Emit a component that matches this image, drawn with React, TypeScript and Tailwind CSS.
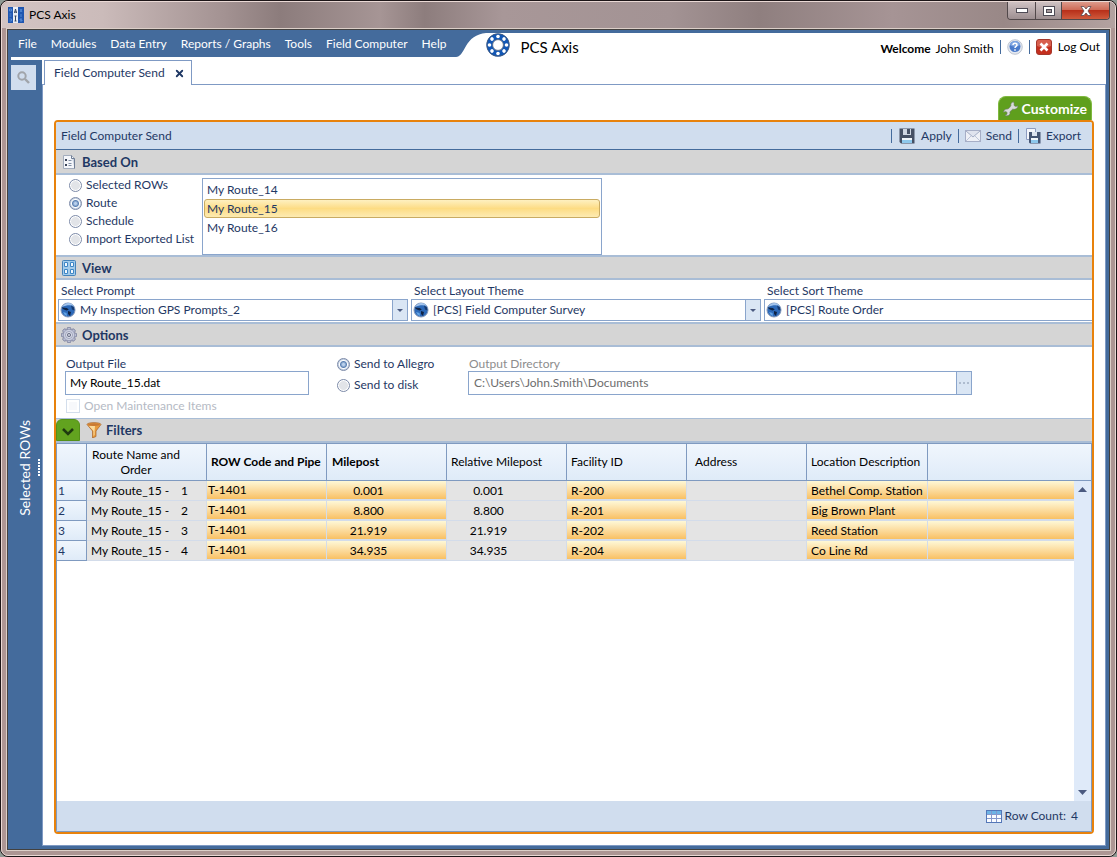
import { useState } from 'react'
import type { ReactNode } from 'react'
import { X } from 'lucide-react'
import clsx from 'clsx'

const menuItems = ['File', 'Modules', 'Data Entry', 'Reports / Graphs', 'Tools', 'Field Computer', 'Help']
const basedOnOptions = ['Selected ROWs', 'Route', 'Schedule', 'Import Exported List']
const routes = ['My Route_14', 'My Route_15', 'My Route_16']

const themes = [
  { id: 'prompt', label: 'Select Prompt', value: 'My Inspection GPS Prompts_2' },
  { id: 'layout', label: 'Select Layout Theme', value: '[PCS] Field Computer Survey' },
  { id: 'sort', label: 'Select Sort Theme', value: '[PCS] Route Order' },
]

const rows = [
  { order: 1, code: 'T-1401', milepost: '0.001', facility: 'R-200', location: 'Bethel Comp. Station' },
  { order: 2, code: 'T-1401', milepost: '8.800', facility: 'R-201', location: 'Big Brown Plant' },
  { order: 3, code: 'T-1401', milepost: '21.919', facility: 'R-202', location: 'Reed Station' },
  { order: 4, code: 'T-1401', milepost: '34.935', facility: 'R-204', location: 'Co Line Rd' },
]

function AppIcon() {
  return (
    <svg width="16" height="16" viewBox="0 0 16 16">
      <rect width="16" height="16" fill="#1f56b0" />
      <rect x="5" width="5" height="16" fill="#e9eef6" />
      <path d="M1.500 2h2v2h-2zM1.500 7h2M1.500 9h2M1.500 12h2v2h-2M12 2l2 3M14 2l-2 3M13 7v3M14 12h-2v1h2v1h-2" stroke="#5f96dd" strokeWidth="0.800" fill="none" />
      <path d="M6.500 6l1-4 1 4M6.500 5h2M7.500 9v5M6.500 9h2M6.500 14h2" stroke="#37475f" fill="none" />
    </svg>
  )
}

function Logo() {
  const holes = [0, 45, 90, 135, 180, 225, 270, 315]
  return (
    <svg width="24" height="24" viewBox="0 0 24 24">
      <circle cx="12" cy="12" r="8.500" fill="none" stroke="#1257b5" strokeWidth="6" />
      <circle cx="12" cy="12" r="11.300" fill="none" stroke="#4a5b73" strokeWidth="0.800" />
      <circle cx="12" cy="12" r="5.400" fill="none" stroke="#4a5b73" strokeWidth="0.800" />
      {holes.map((angle) => (
        <circle key={angle} cx="12" cy="3.500" r="1.800" fill="#fff" transform={`rotate(${angle} 12 12)`} />
      ))}
    </svg>
  )
}

function HelpIcon() {
  return (
    <svg width="16" height="16" viewBox="0 0 16 16">
      <circle cx="8" cy="8" r="7.300" fill="#e4e8f0" stroke="#b3bac8" strokeWidth="0.800" />
      <circle cx="8" cy="7.500" r="5.500" fill="#4a7bcb" />
      <path d="M3 6a5 4 0 0 1 10 0c-3 2-7 2-10 0z" fill="#7fa6e2" />
      <path d="M6 6c0-2.500 4-2.500 4 0 0 1.500-2 1.300-2 3M8 10.300v1.400" fill="none" stroke="#fff" strokeWidth="1.500" />
    </svg>
  )
}

function LogOutIcon() {
  return (
    <svg width="16" height="16" viewBox="0 0 16 16">
      <rect x="0.500" y="0.500" width="15" height="15" rx="2.500" fill="#c42f1e" stroke="#a5382c" />
      <path d="M1 3q0-2 2-2h10q2 0 2 2v4q-7 3-14 0z" fill="#d8604e" />
      <path d="M4.500 4.500l7 7M11.500 4.500l-7 7" stroke="#fff" strokeWidth="2.600" />
    </svg>
  )
}

function FloppyIcon() {
  return (
    <svg width="16" height="16" viewBox="0 0 16 16">
      <path d="M0.500 0.500h15v15H2l-1.500-1.500z" fill="#465064" />
      <rect x="4" y="1" width="8" height="6" fill="#cfd6e2" />
      <rect x="8" y="1" width="3" height="5" fill="#465064" />
      <rect x="3" y="10" width="10" height="5" fill="#8ec8ec" />
      <rect x="3" y="10" width="10" height="2" fill="#f2f7fb" />
    </svg>
  )
}

function EnvelopeIcon() {
  return (
    <svg width="16" height="16" viewBox="0 0 16 16">
      <rect x="0.500" y="2.500" width="15" height="11" fill="#eef0f6" stroke="#a6aec6" />
      <path d="M1 3l7 6 7-6" fill="#dfe3ee" stroke="#a3adc6" />
      <path d="M1 13l5-5M15 13l-5-5" fill="none" stroke="#bcc4d8" />
    </svg>
  )
}

function ExportIcon() {
  return (
    <svg width="16" height="16" viewBox="0 0 16 16">
      <path d="M1.500 0.500h9v11h-9z" fill="#f3f5fb" stroke="#8d9cc0" />
      <path d="M4 4h11.500v11.500H5l-1-1z" fill="#465674" />
      <rect x="7" y="4" width="5" height="4" fill="#dde4ef" />
      <rect x="6" y="11" width="7" height="4" fill="#8ec8ec" />
      <rect x="6" y="10" width="7" height="2" fill="#f2f7fb" />
    </svg>
  )
}

function WrenchIcon() {
  return (
    <svg width="16" height="16" viewBox="0 0 16 16">
      <path
        d="M10.500 0.800c-2 .5-3 2-2.600 4L6 7.300 4.300 8.100C2 7.800.6 9.300.6 11.300l2-.9 1.500 1-.1 1.800-2 1c2 1.200 4.500.5 5-1.600l-.1-1.800 2.700-2.600c2.500.6 5-.5 5.400-3.400l-2.300.8-1.700-1.200.1-2z"
        fill="#d9dcda"
        stroke="#6d7a6a"
        strokeWidth="0.600"
      />
    </svg>
  )
}

function SearchIcon() {
  return (
    <svg width="13" height="13" viewBox="0 0 13 13">
      <circle cx="5" cy="5" r="3.700" fill="none" stroke="#a0a4aa" strokeWidth="2" />
      <path d="M8 8l4 4" stroke="#a0a4aa" strokeWidth="2.400" />
    </svg>
  )
}

function ChecklistIcon() {
  return (
    <svg width="12" height="14" viewBox="0 0 12 14">
      <path d="M0.500 0.500h8l3 3v10h-11z" fill="#f4f6fa" stroke="#a3adbd" />
      <path d="M8.500 0.500v3h3v10" fill="#c9d2df" stroke="#6f7d94" />
      <path d="M2 4h2v2H2zM2 9h2v2H2z" fill="#3c4659" />
      <path d="M5.500 5.500h3M5.500 8.500h3M5.500 10.500h3" stroke="#8290a6" />
    </svg>
  )
}

function ViewIcon() {
  return (
    <svg width="14" height="16" viewBox="0 0 14 16">
      <rect x="0.500" y="0.500" width="13" height="15" rx="1" fill="#a3cbea" stroke="#4583ba" />
      <path d="M2.500 2.500h3v4h-3zM8.500 2.500h3v4h-3zM2.500 9.500h3v4h-3zM8.500 9.500h3v4h-3z" fill="#f3f9fe" stroke="#3d86c6" />
    </svg>
  )
}

function GearIcon() {
  const teeth = [0, 45, 90, 135, 180, 225, 270, 315]
  return (
    <svg width="16" height="16" viewBox="0 0 16 16">
      {teeth.map((angle) => (
        <rect key={angle} x="6.200" y="0.400" width="3.600" height="4" rx="1" fill="#b9bed2" stroke="#6f7494" strokeWidth="0.800" transform={`rotate(${angle} 8 8)`} />
      ))}
      <circle cx="8" cy="8" r="5.600" fill="#cdd1e1" stroke="#878ca8" strokeWidth="0.600" />
      <circle cx="8" cy="8" r="3.500" fill="#e3e6f0" stroke="#8f94ae" strokeWidth="0.800" />
      <circle cx="8" cy="8" r="1.700" fill="#b9bdcc" stroke="#5f647e" strokeWidth="0.800" />
    </svg>
  )
}

function FunnelIcon() {
  return (
    <svg width="16" height="16" viewBox="0 0 16 16">
      <path d="M1 2.500c0-2.500 14-2.500 14 0L10 9v5.500L6.500 16V9z" fill="#e79a3c" stroke="#a9642a" strokeWidth="0.700" />
      <path d="M3 4l4.500 5v5L8.600 13V8.500L9 4z" fill="#fbdb9a" />
      <ellipse cx="8" cy="2.600" rx="6" ry="1.300" fill="#c97a34" />
    </svg>
  )
}

function GlobeIcon() {
  return (
    <svg width="16" height="16" viewBox="0 0 16 16">
      <circle cx="8" cy="8" r="7" fill="#2c69b8" stroke="#8598b8" />
      <path d="M2 5c3-5 9-5 12-1-3-1-8-1-12 1z" fill="#a3c4ec" />
      <path d="M1.800 5.500l5 .5 2 1.500-2 1L5 8 3 7zM8 9l3 1-1 4-2-2z" fill="#0f2345" />
      <path d="M11 3.500l3 2 .5 3-2.500-1z" fill="#163a70" />
      <path d="M3 10q1 3 4 4l-.500-3z" fill="#63a4e6" />
    </svg>
  )
}

function GridIcon() {
  return (
    <svg width="16" height="13" viewBox="0 0 16 13">
      <rect x="0.500" y="0.500" width="15" height="12" fill="#fafcff" stroke="#5477b8" />
      <rect x="1" y="1" width="14" height="3" fill="#6db4e6" />
      <path d="M1 4.500h14M1 8.500h14M5.500 1v11M10.500 1v11" stroke="#8598cc" />
    </svg>
  )
}

function Arrow({ up = false }: { up?: boolean }) {
  return (
    <svg width="9" height="5" viewBox="0 0 9 5">
      <path d={up ? 'M0 5L4.500 0L9 5z' : 'M0 0h9L4.500 5z'} fill="#4b5a80" />
    </svg>
  )
}

function SectionHeader({ icon, title, first = false }: { icon: ReactNode; title: string; first?: boolean }) {
  return (
    <div
      className={clsx(
        'flex h-[25px] shrink-0 items-center border-b-2 border-[#a9bdd6] bg-[#d5d5d5] pl-[5px]',
        !first && 'border-t-2',
      )}
    >
      <span className="flex w-4 justify-center">{icon}</span>
      <h2 className="pl-[5px] text-[13px] font-bold text-[#1f3864]">{title}</h2>
    </div>
  )
}

function Radio({ name, label, checked, onChange }: { name: string; label: string; checked: boolean; onChange: () => void }) {
  return (
    <label className="flex items-center gap-1">
      <input
        type="radio"
        name={name}
        checked={checked}
        onChange={onChange}
        className="h-[13px] w-[13px] shrink-0 appearance-none rounded-full border border-[#7c8aa8] bg-[radial-gradient(circle,#e2e4e8_0_4px,#ffffff_5px)] checked:bg-[radial-gradient(circle,#b9d0ec_0_1px,#5c82b4_3px,#ffffff_4px,#c5d2e4_5px)]"
      />
      {label}
    </label>
  )
}

function TitleBar() {
  return (
    <header className="flex h-[26px] items-start bg-[linear-gradient(90deg,#d3c4c3_0%,#cbbbba_9%,#a39292_20%,#8c7c7c_25%,#a69595_34%,#8d7d7d_38%,#a89798_45%,#a39394_60%,#8f7f7f_68%,#a69495_80%,#998887_90%,#b3a2a0_100%)] pl-[6px]">
      <div className="flex h-[26px] flex-1 items-center gap-[5px] text-black">
        <AppIcon />
        <h1>PCS Axis</h1>
      </div>
      <div className="mr-[5px] flex h-[18px] overflow-hidden rounded-b border border-t-0 border-[#51484a]">
        <button aria-label="Minimize" className="flex w-7 items-center justify-center border-r border-[#51484a] bg-gradient-to-b from-[#cfc2c3] to-[#9d8f91]">
          <svg width="12" height="5" viewBox="0 0 12 5">
            <rect x="0.500" y="0.500" width="11" height="4" fill="#fff" stroke="#4e4b55" />
          </svg>
        </button>
        <button aria-label="Maximize" className="flex w-[26px] items-center justify-center border-r border-[#51484a] bg-gradient-to-b from-[#cfc2c3] to-[#9d8f91]">
          <svg width="12" height="10" viewBox="0 0 12 10">
            <rect x="0.500" y="0.500" width="11" height="9" fill="#fff" stroke="#4e4b55" />
            <rect x="3.500" y="3.500" width="5" height="3" fill="#a69a9c" stroke="#4e4b55" />
          </svg>
        </button>
        <button aria-label="Close" className="flex w-[47px] items-center justify-center bg-[linear-gradient(#dd9a8b_0%,#cf6c58_45%,#b8301a_50%,#cf5a3c_100%)]">
          <svg width="12" height="10" viewBox="0 0 12 10">
            <path d="M1 0.500h3l2 2.500 2-2.500h3L8 5l3 4.500H8L6 7 4 9.500H1L4 5z" fill="#fff" stroke="#5b4a50" strokeWidth="0.800" />
          </svg>
        </button>
      </div>
    </header>
  )
}

function TopBar() {
  return (
    <div className="ml-[3px] flex h-[27px] bg-white">
      <nav className="-ml-[3px] flex h-6 items-center gap-[14px] bg-[#446b9c] pr-[10px] pb-[2px] pl-[10px] text-white">
        {menuItems.map((item) => (
          <button key={item} className="whitespace-nowrap">
            {item}
          </button>
        ))}
      </nav>
      <svg width="30" height="24" viewBox="0 0 30 24" className="shrink-0">
        <path d="M0 0h30C20 1 14 6 10 13 6 20 4 24 0 24z" fill="#446b9c" />
      </svg>
      <div className="flex h-6 flex-1 items-center gap-[10px] text-black">
        <Logo />
        <span className="pt-1 text-[15px]">PCS Axis</span>
      </div>
      <div className="flex h-[27px] items-center pr-[6px] whitespace-nowrap text-black">
        <span className="pt-1">
          <b className="pr-[2px]">Welcome</b> John Smith
        </span>
        <span className="mx-[6px] h-[14px] w-px bg-[#446b9c]" />
        <button aria-label="Help">
          <HelpIcon />
        </button>
        <span className="mx-[6px] h-[14px] w-px bg-[#446b9c]" />
        <button className="flex items-center gap-[6px]">
          <LogOutIcon />
          Log Out
        </button>
      </div>
    </div>
  )
}

function Sidebar() {
  return (
    <aside className="flex w-[34px] shrink-0 flex-col pt-[5px] pl-[3px]">
      <button aria-label="Search" className="flex h-[25px] w-[25px] items-center justify-center bg-[#d0ddee]">
        <SearchIcon />
      </button>
      <div className="flex flex-1 items-center pl-[6px]">
        <button className="rotate-180 text-[14px] leading-4 text-white [writing-mode:vertical-rl]">Selected ROWs</button>
        <span className="ml-[5px] h-[18px] w-[2px] bg-[repeating-linear-gradient(#ffffff_0_2px,transparent_2px_3px)]" />
      </div>
    </aside>
  )
}

function BasedOn() {
  const [basis, setBasis] = useState('Route')
  const [route, setRoute] = useState('My Route_15')

  return (
    <section className="flex h-[80px] pt-[2px] pl-[13px]">
      <fieldset className="w-[133px] text-[#1f3864]">
        {basedOnOptions.map((option) => (
          <div key={option} className="h-[18px] whitespace-nowrap">
            <Radio name="based-on" label={option} checked={basis === option} onChange={() => setBasis(option)} />
          </div>
        ))}
      </fieldset>
      <ul role="listbox" aria-label="Routes" className="mt-px w-[400px] border border-[#8aa5cc] pt-px">
        {routes.map((item) => (
          <li
            key={item}
            role="option"
            aria-selected={item === route}
            onClick={() => setRoute(item)}
            className={clsx(
              'mx-px flex h-[19px] items-center rounded-[3px] border pl-[2px]',
              item === route ? 'border-[#c9ab62] bg-gradient-to-b from-[#fef0c0] via-[#fddc83] to-[#fdebb2]' : 'border-transparent',
            )}
          >
            {item}
          </li>
        ))}
      </ul>
    </section>
  )
}

function ThemeSelects() {
  return (
    <section className="flex h-[42px] gap-[3px] overflow-hidden pt-[3px] pl-[2px]">
      {themes.map((theme) => (
        <div key={theme.id} className="w-[350px] shrink-0">
          <label htmlFor={theme.id} className="block h-4 pl-[3px] leading-4">
            {theme.label}
          </label>
          <div className="relative h-[22px]">
            <select id={theme.id} className="h-[22px] w-full appearance-none border border-[#8aa5cc] bg-white pl-[21px]">
              <option>{theme.value}</option>
            </select>
            <span className="pointer-events-none absolute top-[3px] left-[2px]">
              <GlobeIcon />
            </span>
            <span className="pointer-events-none absolute top-0 right-0 flex h-[22px] w-4 items-center justify-center border border-[#8aa5cc] bg-[#dae6f4]">
              <svg width="6" height="3" viewBox="0 0 6 3">
                <path d="M0 0h6L3 3z" fill="#4b5a80" />
              </svg>
            </span>
          </div>
        </div>
      ))}
    </section>
  )
}

function Options() {
  const [target, setTarget] = useState('Send to Allegro')

  return (
    <section className="flex h-[71px] pt-[9px] pl-[9px]">
      <div className="w-[244px]">
        <label htmlFor="output-file" className="block h-[15px] pl-px leading-[15px]">
          Output File
        </label>
        <input id="output-file" defaultValue="My Route_15.dat" className="block h-6 w-full border border-[#8aa5cc] px-1 pb-px text-black" />
        <label className="mt-[3px] flex items-center gap-1 pl-px leading-4 text-[#b5bac4]">
          <input type="checkbox" disabled className="h-[14px] w-[14px] appearance-none border border-[#d3deec] bg-[#f7f8fb] shadow-[inset_0_0_0_2px_#ffffff]" />
          Open Maintenance Items
        </label>
      </div>
      <fieldset className="ml-7 w-[131px]">
        {['Send to Allegro', 'Send to disk'].map((item) => (
          <div key={item} className="h-[21px]">
            <Radio name="target" label={item} checked={target === item} onChange={() => setTarget(item)} />
          </div>
        ))}
      </fieldset>
      <div className="w-[504px]">
        <label htmlFor="output-dir" className="block h-[15px] pl-px leading-[15px] text-[#8d8d8d]">
          Output Directory
        </label>
        <div className="flex h-6 border border-[#8aa5cc]">
          <input id="output-dir" readOnly defaultValue="C:\Users\John.Smith\Documents" className="flex-1 px-[5px] pb-px text-[#6d6d6d]" />
          <button aria-label="Browse" className="flex w-[15px] items-center justify-center gap-[2px] border-l border-[#8aa5cc] bg-[#dae6f4]">
            <i className="h-[2px] w-[2px] bg-[#aebccf]" />
            <i className="h-[2px] w-[2px] bg-[#aebccf]" />
            <i className="h-[2px] w-[2px] bg-[#aebccf]" />
          </button>
        </div>
      </div>
    </section>
  )
}

const headCell = 'border-r border-b border-[#7f9ac0] bg-gradient-to-b from-[#f0f6fd] to-[#dfebf8] p-0 pl-1 text-left font-normal'
const grayCell = 'border-r border-b border-[#d3dcea] bg-[#e4e4e4] p-0 pl-1'
const goldCell = 'border-r border-b-2 border-[#d3dcea] bg-gradient-to-b from-[#fef8d6] to-[#f8c062] p-0'

function RouteTable() {
  return (
    <div className="flex flex-1 border-x border-t border-[#7f9ac0]">
      <div className="min-w-0 flex-1">
        <table className="w-full table-fixed border-separate border-spacing-0 text-black">
          <colgroup>
            <col className="w-[30px]" />
            <col className="w-[120px]" />
            <col className="w-[120px]" />
            <col className="w-[120px]" />
            <col className="w-[120px]" />
            <col className="w-[120px]" />
            <col className="w-[120px]" />
            <col className="w-[121px]" />
            <col />
          </colgroup>
          <thead>
            <tr className="h-[37px] whitespace-nowrap">
              <th className={headCell} />
              <th className={headCell}>
                <div className="w-[90px] text-center leading-[15px]">
                  Route Name and
                  <br />
                  Order
                </div>
              </th>
              <th className={headCell}>
                <b>ROW Code and Pipe</b>
              </th>
              <th className={headCell}>
                <b className="pl-px">Milepost</b>
              </th>
              <th className={headCell}>Relative Milepost</th>
              <th className={headCell}>Facility ID</th>
              <th className={headCell}>
                <span className="pl-1">Address</span>
              </th>
              <th className={headCell}>Location Description</th>
              <th className="border-b border-[#7f9ac0] bg-gradient-to-b from-[#f0f6fd] to-[#dfebf8]" />
            </tr>
          </thead>
          <tbody>
            {rows.map((row) => (
              <tr key={row.order} className="h-5 leading-4 whitespace-nowrap">
                <td className="border-r border-b border-[#7f9ac0] bg-gradient-to-b from-[#f0f6fd] to-[#dfebf8] p-0 pl-px text-[#1f3864]">{row.order}</td>
                <td className={grayCell}>
                  <div className="flex w-[97px] justify-between">
                    <span>My Route_15 -</span>
                    <span>{row.order}</span>
                  </div>
                </td>
                <td className={clsx(goldCell, 'pl-px')}>{row.code}</td>
                <td className={clsx(goldCell, 'pt-[2px] pr-9 text-center')}>{row.milepost}</td>
                <td className={clsx(grayCell, 'pr-10 text-center')}>{row.milepost}</td>
                <td className={clsx(goldCell, 'pt-[2px] pl-1')}>{row.facility}</td>
                <td className={grayCell} />
                <td className={clsx(goldCell, 'pt-[2px] pl-1')}>{row.location}</td>
                <td className="border-b-2 border-[#d3dcea] bg-gradient-to-b from-[#fef8d6] to-[#f8c062]" />
              </tr>
            ))}
          </tbody>
        </table>
      </div>
      <div className="flex w-[17px] flex-col bg-[#dfeaf9]">
        <div className="h-[37px] border-b border-[#7f9ac0] bg-gradient-to-b from-[#f0f6fd] to-[#dfebf8]" />
        <div className="flex flex-1 flex-col items-center justify-between py-[6px]">
          <button aria-label="Scroll up">
            <Arrow up />
          </button>
          <button aria-label="Scroll down">
            <Arrow />
          </button>
        </div>
      </div>
    </div>
  )
}

function Panel() {
  return (
    <div className="flex flex-1 flex-col overflow-hidden rounded border-2 border-[#e8820c] bg-white">
      <div className="flex h-7 shrink-0 items-center justify-between border-b border-[#446b9c] bg-[#d0ddee] pr-[11px] pl-[5px]">
        <span>Field Computer Send</span>
        <div className="flex items-center">
          <span className="mr-[7px] h-[14px] w-px bg-[#446b9c]" />
          <button className="flex items-center gap-[6px]">
            <FloppyIcon />
            Apply
          </button>
          <span className="mx-[6px] h-[14px] w-px bg-[#446b9c]" />
          <button className="flex items-center gap-[5px]">
            <EnvelopeIcon />
            Send
          </button>
          <span className="mx-[6px] h-[14px] w-px bg-[#446b9c]" />
          <button className="flex items-center gap-[5px]">
            <ExportIcon />
            Export
          </button>
        </div>
      </div>
      <SectionHeader first icon={<ChecklistIcon />} title="Based On" />
      <BasedOn />
      <SectionHeader icon={<ViewIcon />} title="View" />
      <ThemeSelects />
      <SectionHeader icon={<GearIcon />} title="Options" />
      <Options />
      <div className="flex h-[25px] shrink-0 items-stretch border-t border-b-2 border-[#a9bdd6] bg-[#d5d5d5]">
        <button aria-label="Collapse filters" className="flex w-6 items-center justify-center rounded-t-md border border-[#549018] bg-[#62a31f] pt-1">
          <svg width="12" height="8" viewBox="0 0 12 8">
            <path d="M1 1l5 5 5-5" fill="none" stroke="#1f3b10" strokeWidth="2.500" />
          </svg>
        </button>
        <span className="flex items-center pl-[6px]">
          <FunnelIcon />
        </span>
        <h2 className="self-center pl-1 text-[13px] font-bold text-[#1f3864]">Filters</h2>
      </div>
      <RouteTable />
      <div className="flex h-[31px] shrink-0 items-center justify-end gap-[3px] border border-t-0 border-[#7f9ac0] bg-[#d0ddee] pr-[13px]">
        <GridIcon />
        <span>
          Row Count: <span className="pl-[2px]">4</span>
        </span>
      </div>
    </div>
  )
}

export default function App() {
  return (
    <div className="flex min-h-screen flex-col bg-[#8f9a94] font-['Lato','Open_Sans',sans-serif] text-[12px] leading-4 text-[#1f3864]">
      <div className="flex flex-1 flex-col rounded-lg border border-[#1c1517] bg-[#ad9694]">
        <div className="flex flex-1 flex-col overflow-hidden rounded-[7px] border border-[#ead9d5]">
          <TitleBar />
          <div className="mx-1 mb-1 flex flex-1 flex-col border border-[#dccfc8]">
            <div className="flex flex-1 flex-col border border-[#43413f] bg-[#446b9c] pt-[3px] pr-[3px] pb-[3px]">
              <TopBar />
              <div className="flex flex-1">
                <Sidebar />
                <main className="flex min-w-0 flex-1 flex-col bg-white">
                  <div className="flex h-[25px]">
                    <span className="w-[2px] border-b border-[#7f9ac4]" />
                    <div className="flex items-center gap-[9px] border-x border-t border-[#7f9ac4] pr-[6px] pl-[9px]">
                      <span>Field Computer Send</span>
                      <button aria-label="Close tab">
                        <X size={11} strokeWidth={4} />
                      </button>
                    </div>
                    <span className="flex-1 border-b border-[#7f9ac4]" />
                  </div>
                  <div className="flex flex-1 flex-col border-x border-b border-[#7f9ac4] px-[11px] pt-[11px] pb-[11px]">
                    <button className="mr-[2px] flex h-6 items-center gap-[3px] self-end rounded-t-lg border border-b-0 border-[#7fb93f] bg-[#5f9f1d] px-1 text-[14px] font-bold text-white">
                      <WrenchIcon />
                      Customize
                    </button>
                    <Panel />
                  </div>
                </main>
              </div>
            </div>
          </div>
        </div>
      </div>
    </div>
  )
}
